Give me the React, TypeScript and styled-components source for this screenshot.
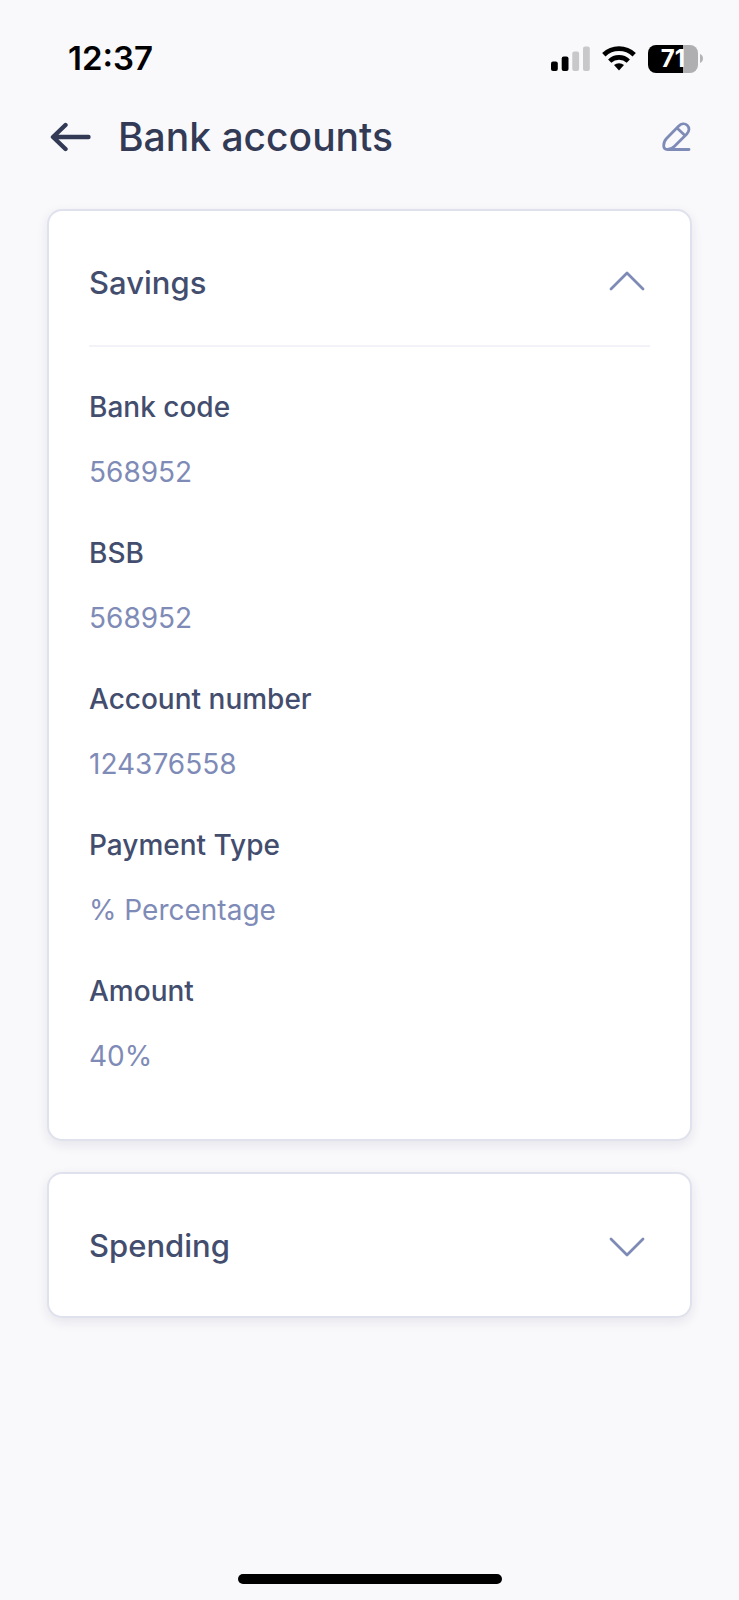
import React, { useState } from "react";
import styled, { createGlobalStyle } from "styled-components";

const GlobalStyle = createGlobalStyle`
  *, *::before, *::after { box-sizing: border-box; }
  body {
    margin: 0;
    background: #f9f9fc;
    font-family: Inter, "Liberation Sans", sans-serif;
  }
  h1, h2, dl, dd { margin: 0; }
  button { font: inherit; color: inherit; background: none; border: 0; padding: 0; cursor: pointer; }
  svg { display: block; flex: none; }
`;

const Screen = styled.div`
  display: flex;
  flex-direction: column;
  min-height: 100vh;
`;

const StatusBar = styled.div`
  display: flex;
  align-items: center;
  justify-content: space-between;
  padding: 38px 36px 0 68px;
  color: #000;
`;

const Clock = styled.time`
  font-size: 33px;
  font-weight: 600;
  line-height: 41px;
`;

const StatusIcons = styled.div`
  display: flex;
  align-items: center;
  gap: 12px;
`;

const Battery = styled.div`
  display: flex;
  align-items: center;
  gap: 2px;
`;

const BatteryBody = styled.div<{ $level: number }>`
  width: 50px;
  height: 28px;
  border-radius: 8px;
  background: linear-gradient(to right, #000 ${(p) => p.$level}%, #afafb1 ${(p) => p.$level}%);
  color: #fff;
  font-size: 24px;
  font-weight: 700;
  line-height: 28px;
  text-align: center;
`;

const TopBar = styled.header`
  display: flex;
  align-items: center;
  padding: 34px 48px 0 50px;
  color: #323a55;
`;

const Title = styled.h1`
  flex: 1;
  margin-left: 26px;
  font-size: 39px;
  font-weight: 500;
  line-height: 48px;
`;

const IconButton = styled.button`
  color: #7f8bb7;
`;

const BackButton = styled(IconButton)`
  color: #323a55;
`;

const Accounts = styled.main`
  display: flex;
  flex-direction: column;
  gap: 31px;
  padding: 48px 47px 0;
`;

const Card = styled.section`
  padding: 0 40px;
  border: 2px solid #dfe2ed;
  border-radius: 15px;
  background: #fff;
  box-shadow: 0 4px 12px rgba(30, 32, 50, 0.09);
`;

const CardHeader = styled.h2<{ $open: boolean }>`
  padding: 51px 0 ${(p) => (p.$open ? 41 : 49)}px;
  border-bottom: ${(p) => (p.$open ? "2px solid #f2f2f8" : "0")};
  font-size: 31px;
  font-weight: 500;
  line-height: 42px;
  color: #434d6e;
`;

const Toggle = styled.button`
  display: flex;
  align-items: center;
  justify-content: space-between;
  width: 100%;
  padding-right: 5px;
  text-align: left;
`;

const Fields = styled.dl`
  display: flex;
  flex-direction: column;
  gap: 45px;
  padding: 42px 0 65px;
  font-size: 28px;
  line-height: 36px;
`;

const Field = styled.div`
  display: flex;
  flex-direction: column;
  gap: 29px;
`;

const Label = styled.dt`
  font-weight: 500;
  color: #434d6e;
`;

const Value = styled.dd`
  color: #7f8bb7;
`;

const HomeIndicator = styled.div`
  width: 264px;
  height: 10px;
  margin: auto auto 16px;
  border-radius: 5px;
  background: #000;
`;

const SignalIcon = () => (
  <svg width="39" height="25" viewBox="0 0 39 25" aria-hidden="true">
    <rect x="0" y="15.5" width="6.8" height="9.5" rx="2" fill="#000" />
    <rect x="10.7" y="10.5" width="6.8" height="14.5" rx="2" fill="#000" />
    <rect x="21.3" y="5.5" width="6.8" height="19.5" rx="2" fill="#c8c8ca" />
    <rect x="32" y="0.5" width="6.8" height="24.5" rx="2" fill="#c8c8ca" />
  </svg>
);

const WifiIcon = () => (
  <svg width="34" height="25" viewBox="0 0 34 25" fill="none" stroke="#000" aria-hidden="true">
    <path d="M1.8 8.8A22 22 0 0 1 32.2 8.8" strokeWidth="4.8" />
    <path d="M7.7 15.1A13.4 13.4 0 0 1 26.3 15.1" strokeWidth="4.6" />
    <path d="M17 24.6L12 19.1A7.6 7.6 0 0 1 22 19.1Z" fill="#000" stroke="none" />
  </svg>
);

const BatteryTip = () => (
  <svg width="3" height="9" viewBox="0 0 3 9" aria-hidden="true">
    <path d="M0 0C4 1.5 4 7.500 0 9Z" fill="#b4b4b6" />
  </svg>
);

const ArrowLeftIcon = () => (
  <svg width="42" height="30" viewBox="0 0 42 30" fill="none" stroke="currentColor" strokeWidth="4.4" strokeLinecap="round" strokeLinejoin="round" aria-hidden="true">
    <path d="M38.500 15H3.500M15.500 3L3 15L15.500 27" />
  </svg>
);

const PencilIcon = () => (
  <svg width="29" height="30" viewBox="0 0 29 30" fill="none" stroke="currentColor" strokeWidth="2.800" strokeLinecap="round" strokeLinejoin="round" aria-hidden="true">
    <path d="M27 27.500H5.500C3 27.500 1.700 26 1.700 23.500C1.700 20.500 2.500 18.600 4.500 16.500L16.500 4.200C19.200 1.500 22.700 1 25.200 3.300C27.700 5.700 27.500 9.300 24.800 12L12.500 24.300C10.500 26.300 8.500 27.500 5.500 27.500M15.500 6.500L23 13.500" />
  </svg>
);

const ChevronIcon = ({ up }: { up: boolean }) => (
  <svg width="36" height="24" viewBox="0 0 36 24" fill="none" stroke="#7f8bb7" strokeWidth="2.800" strokeLinecap="round" strokeLinejoin="round" aria-hidden="true">
    <path d={up ? "M2 18L18 2L34 18" : "M2 5L18 21L34 5"} />
  </svg>
);

type Entry = { label: string; value: string };

const savings: Entry[] = [
  { label: "Bank code", value: "568952" },
  { label: "BSB", value: "568952" },
  { label: "Account number", value: "124376558" },
  { label: "Payment Type", value: "% Percentage" },
  { label: "Amount", value: "40%" },
];

const spending: Entry[] = [
  { label: "Payment Type", value: "% Percentage" },
  { label: "Amount", value: "60%" },
];

function Account({ name, entries, defaultOpen = false }: { name: string; entries: Entry[]; defaultOpen?: boolean }) {
  const [open, setOpen] = useState(defaultOpen);
  return (
    <Card>
      <CardHeader $open={open}>
        <Toggle type="button" aria-expanded={open} onClick={() => setOpen(!open)}>
          {name}
          <ChevronIcon up={open} />
        </Toggle>
      </CardHeader>
      {open && (
        <Fields>
          {entries.map((e) => (
            <Field key={e.label}>
              <Label>{e.label}</Label>
              <Value>{e.value}</Value>
            </Field>
          ))}
        </Fields>
      )}
    </Card>
  );
}

export default function App() {
  return (
    <Screen>
      <GlobalStyle />
      <StatusBar>
        <Clock>12:37</Clock>
        <StatusIcons>
          <SignalIcon />
          <WifiIcon />
          <Battery>
            <BatteryBody $level={71}>71</BatteryBody>
            <BatteryTip />
          </Battery>
        </StatusIcons>
      </StatusBar>
      <TopBar>
        <BackButton type="button" aria-label="Back">
          <ArrowLeftIcon />
        </BackButton>
        <Title>Bank accounts</Title>
        <IconButton type="button" aria-label="Edit">
          <PencilIcon />
        </IconButton>
      </TopBar>
      <Accounts>
        <Account name="Savings" entries={savings} defaultOpen />
        <Account name="Spending" entries={spending} />
      </Accounts>
      <HomeIndicator />
    </Screen>
  );
}
